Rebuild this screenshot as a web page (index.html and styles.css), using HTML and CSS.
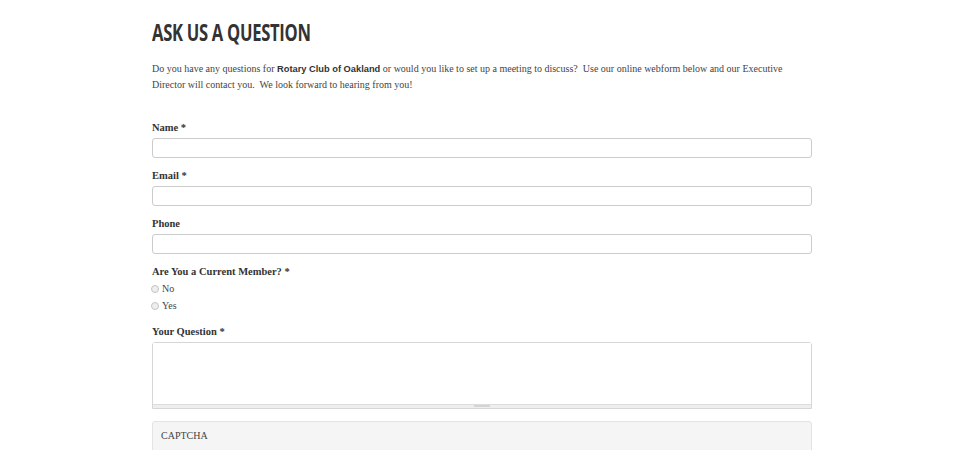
FILE: index.html
```html
<!doctype html>
<html lang="en">
<head>
    <meta charset="UTF-8">
    <title>Ask Us a Question</title>
    <link rel="stylesheet" href="styles.css">
</head>
<body>
<div class="page">
    <h1 class="title">Ask Us a Question</h1>
    <p class="intro">
        Do you have any questions for <b>Rotary Club of Oakland</b> or would you like to set up a meeting to discuss?&nbsp; Use our online webform below and our Executive Director will contact you.&nbsp; We look forward to hearing from you!
    </p>

    <form class="webform">
        <div class="field">
            <label for="name">Name *</label>
            <input type="text" id="name" class="text-input">
        </div>
        <div class="field">
            <label for="email">Email *</label>
            <input type="text" id="email" class="text-input">
        </div>
        <div class="field">
            <label for="phone">Phone</label>
            <input type="text" id="phone" class="text-input">
        </div>
        <div class="field">
            <label>Are You a Current Member? *</label>
            <div class="radios">
                <div class="radio"><span class="dot"></span>No</div>
                <div class="radio"><span class="dot"></span>Yes</div>
            </div>
        </div>
        <div class="field">
            <label for="question">Your Question *</label>
            <div class="area-wrap">
                <textarea id="question" class="area"></textarea>
                <div class="grip"><span></span></div>
            </div>
        </div>
        <div class="captcha">CAPTCHA</div>
    </form>
</div>
</body>
</html>
```

FILE: styles.css
```css
* {
    margin: 0;
    padding: 0;
    box-sizing: border-box;
}

body {
    background: #fff;
    font-family: "Liberation Serif", Georgia, serif;
    color: #444;
}

.page {
    width: 660px;
    margin: 0 auto;
    padding-top: 18px;
    position: relative;
    left: 2px;
}

.title {
    display: inline-block;
    font-family: "Open Sans", sans-serif;
    font-weight: 700;
    font-size: 24px;
    letter-spacing: -0.4px;
    text-transform: uppercase;
    color: #333;
    line-height: 28px;
    transform: scaleX(0.69);
    transform-origin: left center;
    white-space: nowrap;
}

.intro {
    margin-top: 15px;
    font-size: 10px;
    line-height: 16px;
    color: #444;
}

.intro b {
    font-family: "Liberation Sans", Arial, sans-serif;
    font-size: 9.3px;
    color: #333;
}

.webform {
    margin-top: 28px;
}

.field {
    margin-bottom: 11px;
}

.field label {
    display: block;
    font-size: 10.5px;
    font-weight: bold;
    color: #333;
    line-height: 13px;
    margin-bottom: 4px;
}

.text-input {
    display: block;
    width: 100%;
    height: 20px;
    border: 1px solid #ccc;
    border-radius: 3px;
    background: #fff;
}

.radios {
    margin-top: -2px;
}

.radio {
    display: flex;
    align-items: center;
    font-size: 10px;
    line-height: 17px;
    color: #444;
}

.dot {
    width: 8px;
    height: 8px;
    border: 1px solid #c4c4c4;
    border-radius: 50%;
    background: #eee;
    margin: 0 3px 0 -1px;
}

.area-wrap {
    border: 1px solid #d6d6d6;
    border-radius: 3px 3px 0 0;
}

.area {
    display: block;
    width: 100%;
    height: 61px;
    border: none;
    resize: none;
    background: #fff;
}

.grip {
    height: 4px;
    background: #eee;
    border-top: 1px solid #ddd;
    display: flex;
    justify-content: center;
}

.grip span {
    width: 16px;
    height: 2px;
    background: #d4d4d4;
}

.captcha {
    margin-top: 12px;
    height: 30px;
    background: #f5f5f5;
    border: 1px solid #e3e3e3;
    border-radius: 3px 3px 0 0;
    padding: 6px 8px;
    font-size: 10px;
    line-height: 16px;
    color: #444;
}
```
